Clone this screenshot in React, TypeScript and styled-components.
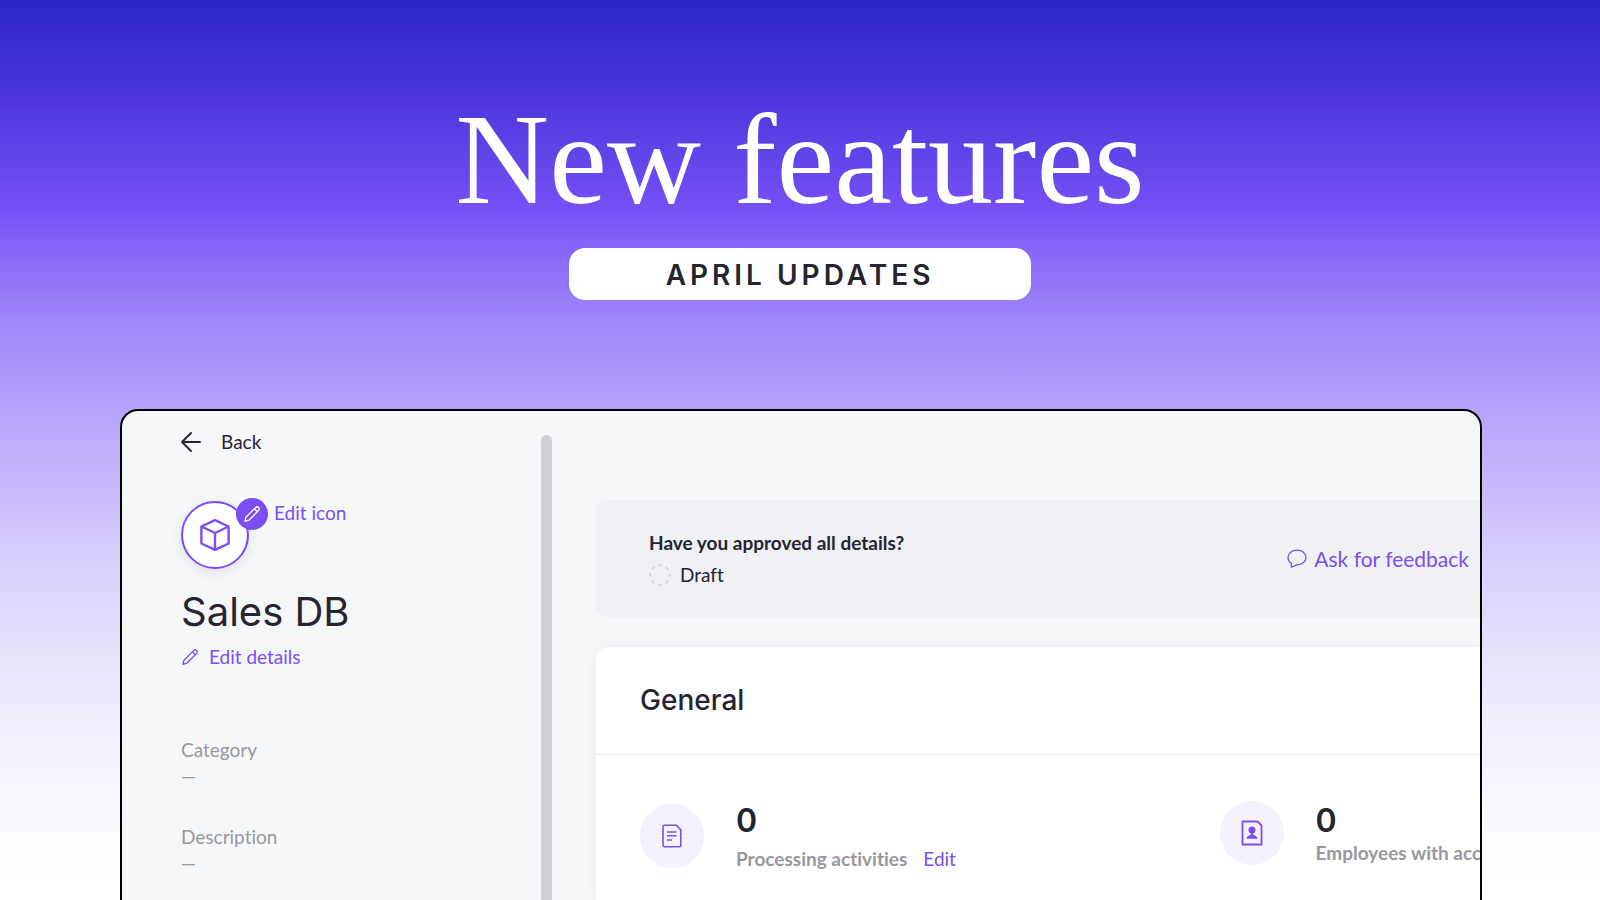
import React from "react";
import styled, { createGlobalStyle } from "styled-components";

const ink = "#25242f";
const violet = "#7c4df2";
const muted = "#98979b";

const GlobalStyle = createGlobalStyle`
  * { box-sizing: border-box; }
  body {
    margin: 0;
    font-family: Lato, "Liberation Sans", sans-serif;
    font-size: 19px;
    font-variant-ligatures: none;
    color: ${ink};
  }
  button { font: inherit; font-variant-ligatures: none; border: 0; background: none; padding: 0; cursor: pointer; }
  h1, h2, h3, p, dl, dt, dd { margin: 0; font-weight: 400; }
`;

const Page = styled.div`
  height: 100vh;
  overflow: hidden;
  display: flex;
  flex-direction: column;
  background: linear-gradient(
    #2c25c9 0%, #4d38dc 11%, #7450f5 23%, #8562f8 27%, #a088f9 36%,
    #b4a1fb 45%, #c8b9fb 54%, #d6ccfd 61%, #e8e2fb 73%, #f4f2fe 83%,
    #fdfdff 93%, #ffffff 100%
  );
`;

const Hero = styled.header`
  flex: none;
  display: flex;
  flex-direction: column;
  align-items: center;
  padding: 85px 0 109px;
`;

const Title = styled.h1`
  font-family: "Liberation Serif", serif;
  font-size: 130px;
  line-height: 148px;
  color: #fff;
`;

const Pill = styled.p`
  width: 462px;
  max-width: 90%;
  margin-top: 15px;
  padding-top: 2px;
  border-radius: 16px;
  background: #fff;
  font-family: Inter, sans-serif;
  font-size: 28px;
  font-weight: 600;
  line-height: 50px;
  letter-spacing: 4px;
  text-align: center;
`;

const Frame = styled.main`
  flex: 1;
  min-height: 0;
  margin: 0 118px 0 120px;
  display: flex;
  overflow: hidden;
  border: 2px solid #000;
  border-bottom: 0;
  border-radius: 18px 18px 0 0;
  background: #f6f7f9;
`;

const Sidebar = styled.aside`
  flex: none;
  display: flex;
  flex-direction: column;
  align-items: flex-start;
  width: 419px;
  padding: 19px 0 0 59px;
`;

const TextButton = styled.button<{ $tone?: string; $gap?: number; $large?: boolean }>`
  display: inline-flex;
  align-items: center;
  gap: ${(p) => p.$gap ?? 0}px;
  line-height: 24px;
  white-space: nowrap;
  font-size: ${(p) => (p.$large ? 21 : 19)}px;
  color: ${(p) => p.$tone ?? violet};
`;

const Identity = styled.div`
  display: flex;
  align-items: flex-start;
  gap: 25px;
  margin-top: 47px;
`;

const Avatar = styled.div`
  position: relative;
  display: grid;
  place-items: center;
  width: 68px;
  height: 68px;
  border: 2px solid ${violet};
  border-radius: 50%;
  background: #fff;
  box-shadow: 0 3px 12px rgba(30, 30, 60, 0.1);
`;

const Badge = styled.span`
  position: absolute;
  top: -5px;
  right: -21px;
  display: grid;
  place-items: center;
  width: 32px;
  height: 32px;
  border-radius: 50%;
  background: ${violet};
  color: #fff;
`;

const Name = styled.h2`
  margin: 19px 0 9px;
  font-family: Inter, sans-serif;
  font-size: 40px;
  line-height: 48px;
`;

const Facts = styled.dl`
  display: flex;
  flex-direction: column;
  gap: 35px;
  margin-top: 68px;
  line-height: 26px;
  color: ${muted};
`;

const ScrollBar = styled.div`
  flex: none;
  width: 11px;
  margin-top: 24px;
  border-radius: 6px 6px 0 0;
  background: #d0d1d4;
`;

const Content = styled.div`
  flex: 1;
  min-width: 0;
  display: flex;
  flex-direction: column;
  gap: 30px;
  padding: 89px 0 0 44px;
`;

const Approval = styled.section`
  display: flex;
  align-items: center;
  justify-content: space-between;
  padding: 27px 11px 26px 53px;
  border-radius: 12px 0 0 12px;
  background: #f0f1f5;
`;

const Question = styled.h3`
  font-size: 19px;
  font-weight: 700;
  line-height: 32px;
`;

const Status = styled.p`
  display: flex;
  align-items: center;
  gap: 9px;
  line-height: 32px;
`;

const Card = styled.section`
  flex: 1;
  border-radius: 12px 0 0 0;
  background: #fff;
  box-shadow: 0 0 12px rgba(30, 30, 60, 0.05);
`;

const CardTitle = styled.h2`
  padding: 37px 44px;
  border-bottom: 1px solid #ececee;
  font-family: Inter, sans-serif;
  font-size: 28px;
  font-weight: 500;
  line-height: 33px;
`;

const Stats = styled.div`
  display: grid;
  grid-template-columns: 69% 1fr;
  align-items: start;
  padding: 46px 0 0 44px;
`;

const Stat = styled.div`
  display: flex;
  align-items: center;
  gap: 32px;
  min-width: 0;
`;

const Disc = styled.div`
  flex: none;
  display: grid;
  place-items: center;
  width: 64px;
  height: 64px;
  border-radius: 50%;
  background: #f5f2fe;
  color: ${violet};
`;

const Value = styled.p`
  font-family: Inter, sans-serif;
  font-size: 32px;
  font-weight: 600;
  line-height: 40px;
`;

const LabelRow = styled.div`
  display: flex;
  align-items: flex-end;
  gap: 16px;
`;

const Label = styled.p`
  font-size: 19px;
  font-weight: 700;
  line-height: 24px;
  white-space: nowrap;
  color: ${muted};
`;

const EditButton = styled(TextButton)`
  padding-top: 6px;
`;

const ArrowIcon = () => (
  <svg width="20" height="20" viewBox="0 0 20 20" fill="none" stroke="currentColor" strokeWidth="1.8" strokeLinecap="round" strokeLinejoin="round">
    <path d="M19 10H1M10 1L1 10l9 9" />
  </svg>
);

const PencilIcon = () => (
  <svg width="18" height="18" viewBox="0 0 18 18" fill="none" stroke="currentColor" strokeWidth="1.3" strokeLinejoin="round">
    <path d="M2 16.300l.9-4L12.800 2.400c1.900-1.700 4.600.8 2.900 2.800L5.900 15.200zM11.400 3.800l2.900 2.900" />
  </svg>
);

const CubeIcon = () => (
  <svg width="32" height="34" viewBox="0 0 32 34" fill="none" stroke={violet} strokeWidth="2.4" strokeLinejoin="round">
    <path d="M16 2.200L29.600 8.500v17L16 31.800 2.400 25.500v-17zM2.400 8.500L16 15l13.600-6.500M16 15v16.500" />
  </svg>
);

const DraftIcon = () => (
  <svg width="22" height="22" viewBox="0 0 22 22" fill="none" stroke="#d3d3d5" strokeWidth="2">
    <circle cx="11" cy="11" r="9.800" strokeDasharray="3.400 4.300" strokeDashoffset="1.700" />
  </svg>
);

const BubbleIcon = () => (
  <svg width="20" height="20" viewBox="0 0 20 20" fill="none" stroke="currentColor" strokeWidth="1.3" strokeLinejoin="round">
    <path d="M4.300 14.300C2.200 13 1 11 1 8.700 1 4.400 5 1.200 10 1.200s9 3.200 9 7.500c0 4.200-4 7-9 7.200-1.600.1-3.100 1.600-5.600 2.200z" />
  </svg>
);

const DocumentIcon = () => (
  <svg width="20" height="24" viewBox="0 0 20 24" fill="none" stroke="currentColor" strokeWidth="1.6" strokeLinejoin="round">
    <path d="M2.500 1.200h11.800l4.500 4.600v15.500a1.500 1.500 0 0 1-1.500 1.500H2.500A1.500 1.500 0 0 1 1 21.300V2.700a1.500 1.500 0 0 1 1.500-1.500z" />
    <path d="M5 8h9.500M5 11.700h9.500M5 16h5" />
  </svg>
);

const PersonFileIcon = () => (
  <svg width="22" height="26" viewBox="0 0 22 26" fill="none" stroke="currentColor" strokeWidth="1.8" strokeLinejoin="round">
    <path d="M1.500 1.500h15l4 4v19h-19z" />
    <g fill="currentColor" stroke="none">
      <circle cx="11" cy="10" r="3.500" />
      <path d="M9.800 12h2.400v3c2.500.3 4 1.500 4.300 3.800h-11c.3-2.300 1.800-3.500 4.300-3.800z" />
    </g>
  </svg>
);

export default function App() {
  return (
    <Page>
      <GlobalStyle />
      <Hero>
        <Title>New features</Title>
        <Pill>APRIL UPDATES</Pill>
      </Hero>
      <Frame>
        <Sidebar>
          <TextButton $tone={ink} $gap={20}>
            <ArrowIcon />
            Back
          </TextButton>
          <Identity>
            <Avatar>
              <CubeIcon />
              <Badge>
                <PencilIcon />
              </Badge>
            </Avatar>
            <TextButton>Edit icon</TextButton>
          </Identity>
          <Name>Sales DB</Name>
          <TextButton $gap={10}>
            <PencilIcon />
            Edit details
          </TextButton>
          <Facts>
            <div>
              <dt>Category</dt>
              <dd>—</dd>
            </div>
            <div>
              <dt>Description</dt>
              <dd>—</dd>
            </div>
          </Facts>
        </Sidebar>
        <ScrollBar />
        <Content>
          <Approval>
            <div>
              <Question>Have you approved all details?</Question>
              <Status>
                <DraftIcon />
                Draft
              </Status>
            </div>
            <TextButton $gap={7} $large>
              <BubbleIcon />
              Ask for feedback
            </TextButton>
          </Approval>
          <Card>
            <CardTitle>General</CardTitle>
            <Stats>
              <Stat>
                <Disc>
                  <DocumentIcon />
                </Disc>
                <div>
                  <Value>0</Value>
                  <LabelRow>
                    <Label>Processing activities</Label>
                    <EditButton>Edit</EditButton>
                  </LabelRow>
                </div>
              </Stat>
              <Stat>
                <Disc>
                  <PersonFileIcon />
                </Disc>
                <div>
                  <Value>0</Value>
                  <Label>Employees with access</Label>
                </div>
              </Stat>
            </Stats>
          </Card>
        </Content>
      </Frame>
    </Page>
  );
}
